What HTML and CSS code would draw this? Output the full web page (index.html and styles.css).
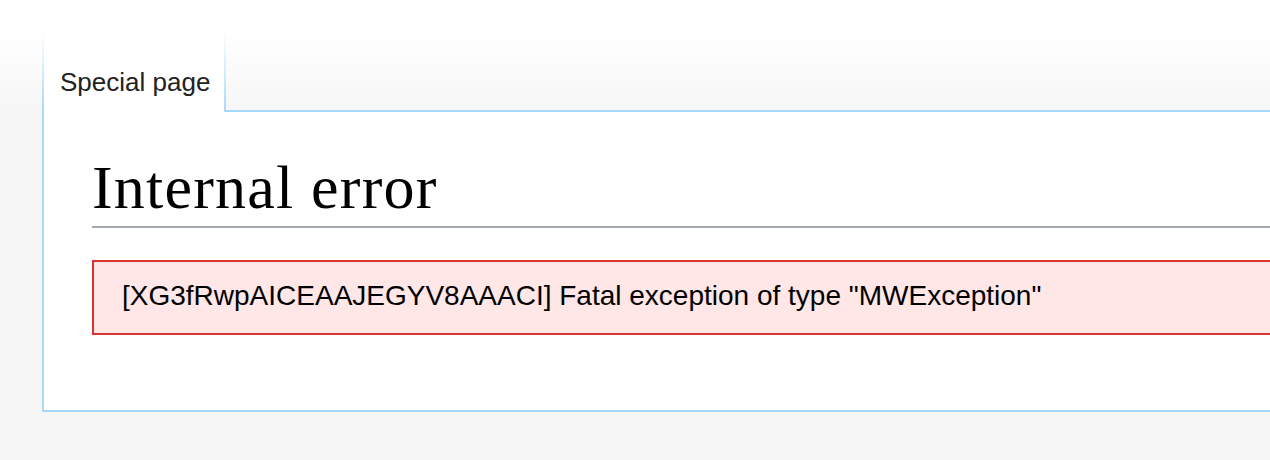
FILE: index.html
```html
<!DOCTYPE html>
<html lang="en">
<head>
<meta charset="utf-8">
<title>Internal error</title>
<link rel="stylesheet" href="styles.css">
</head>
<body>
<div class="page">
  <div class="tabs">
    <div class="tab">Special page</div>
    <div class="tabs-fill"></div>
  </div>
  <div class="content">
    <h1 class="heading">Internal error</h1>
    <div class="errorbox">
      <p class="error">[XG3fRwpAICEAAJEGYV8AAACI] Fatal exception of type "MWException"</p>
    </div>
  </div>
</div>
</body>
</html>
```

FILE: styles.css
```css
html, body {
  margin: 0;
  padding: 0;
  overflow: hidden;
}

body {
  background-color: #f6f6f6;
  background-image: linear-gradient(to bottom, #ffffff 0, #ffffff 30px, #f6f6f6 112px);
  background-repeat: no-repeat;
  font-family: "Liberation Sans", Arial, sans-serif;
  color: #202122;
}

.page {
  padding: 33px 0 0 42px;
}

.tabs {
  display: flex;
}

.tab {
  background: #ffffff;
  font-size: 26px;
  line-height: 30px;
  padding: 34px 14px 15px 16px;
  color: #222222;
  border-left: 2px solid #a7d7f9;
  border-right: 2px solid #a7d7f9;
  border-top: 0;
  border-bottom: 0;
  border-image: linear-gradient(to bottom, rgba(167, 215, 249, 0) 0, #a7d7f9 100%) 1;
}

.tabs-fill {
  flex: 1;
  border-bottom: 2px solid #a7d7f9;
}

.content {
  background: #ffffff;
  border-left: 2px solid #a7d7f9;
  border-bottom: 2px solid #a7d7f9;
  padding: 39px 0 75px 48px;
  overflow: hidden;
}

.heading {
  margin: 0 -6px 0 0;
  padding: 0 0 3px 0;
  font-family: "Liberation Serif", "Times New Roman", serif;
  font-weight: normal;
  font-size: 62px;
  line-height: 72px;
  letter-spacing: 1.2px;
  color: #000000;
  border-bottom: 2px solid #a2a9b1;
}

.errorbox {
  margin: 32px -6px 0 0;
  background: #fee7e6;
  border: 2px solid #dd3333;
  padding: 0 28px 3px 28px;
}

.error {
  margin: 0;
  font-size: 28px;
  line-height: 68px;
  color: #000000;
}
```
